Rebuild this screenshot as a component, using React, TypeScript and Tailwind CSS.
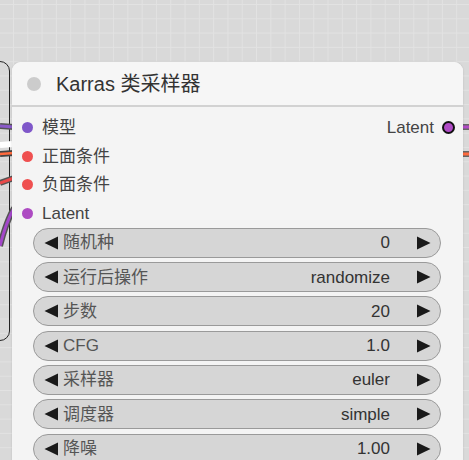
import React from "react";

const font = { fontFamily: '"Liberation Sans", "Noto Sans CJK SC", sans-serif' };

const inputs = [
  { label: "模型", color: "bg-[#7f57c9]" },
  { label: "正面条件", color: "bg-[#ef5050]" },
  { label: "负面条件", color: "bg-[#ef5050]" },
  { label: "Latent", color: "bg-[#ad4bc2]" },
];

const widgets = [
  { label: "随机种", value: "0" },
  { label: "运行后操作", value: "randomize" },
  { label: "步数", value: "20" },
  { label: "CFG", value: "1.0" },
  { label: "采样器", value: "euler" },
  { label: "调度器", value: "simple" },
  { label: "降噪", value: "1.00" },
];

function Tri({ dir }: { dir: "l" | "r" }) {
  return (
    <svg width="14" height="14" viewBox="0 0 14 14" className="shrink-0">
      {dir === "l" ? (
        <polygon points="14,0.5 14,13.5 0.5,7" fill="#1a1a1a" />
      ) : (
        <polygon points="0,0.5 0,13.5 13.5,7" fill="#1a1a1a" />
      )}
    </svg>
  );
}

export default function App() {
  return (
    <div
      className="relative w-[469px] h-[460px] overflow-hidden bg-[#d9d9d9] bg-[linear-gradient(to_right,#e2e2e2_1px,transparent_1px),linear-gradient(to_bottom,#e2e2e2_1px,transparent_1px)] bg-[size:14.3px_14.3px] bg-[position:13px_4px]"
      style={font}
    >
      {/* neighbouring node outline */}
      <div className="absolute left-[-100px] top-[61px] w-[110px] h-[280px] rounded-[10px] border border-[#222]" />

      {/* wires */}
      <svg className="absolute left-0 top-0" width="469" height="460">
        <g fill="none" strokeLinecap="butt">
          <path d="M0 126 L14 127" stroke="#555" strokeWidth="6" />
          <path d="M0 126 L14 127" stroke="#8a5ac8" strokeWidth="3" />
          <path d="M0 154 L14 153" stroke="#444" strokeWidth="6" />
          <path d="M0 154 L14 153" stroke="#ff6a3d" strokeWidth="2.5" />
          <path d="M0 145 L12 144" stroke="#ffffff" strokeWidth="6" />
          <path d="M0 183 L14 178" stroke="#555" strokeWidth="6" />
          <path d="M0 183 L14 178" stroke="#e94a4a" strokeWidth="3" />
          <path d="M0 246 Q6 222 14 208" stroke="#555" strokeWidth="6" />
          <path d="M0 246 Q6 222 14 208" stroke="#a347c9" strokeWidth="3" />
          <path d="M460 127 L469 127" stroke="#666" strokeWidth="6" />
          <path d="M460 127 L469 127" stroke="#b04bc6" strokeWidth="3" />
          <path d="M460 154 L469 154" stroke="#666" strokeWidth="6" />
          <path d="M460 154 L469 154" stroke="#ff6a3d" strokeWidth="3" />
        </g>
      </svg>

      {/* node */}
      <div className="absolute left-[12px] top-[62px] w-[451px] h-[420px] rounded-[9px] bg-[#f4f4f4] shadow-[0_0_2px_rgba(0,0,0,0.15)]">
        <div className="h-[45px] flex items-center rounded-t-[9px] bg-[#f6f6f6] border-b-2 border-[#d2d2d2]">
          <div className="w-[14px] h-[14px] rounded-full bg-[#cccccc] ml-[15px]" />
          <span className="ml-[15px] text-[20px] text-[#333] leading-none">Karras 类采样器</span>
        </div>

        <div className="pt-[6px] flex flex-col">
          {inputs.map((inp, i) => (
            <div key={i} className="h-[28.7px] flex items-center">
              <div className={`w-[11px] h-[11px] rounded-full ${inp.color} ml-[10px]`} />
              <span className="ml-[9px] text-[17px] text-[#444] leading-none">{inp.label}</span>
              {i === 0 && (
                <div className="ml-auto flex items-center">
                  <span className="text-[17px] text-[#444] leading-none">Latent</span>
                  <div className="w-[13px] h-[13px] rounded-full bg-[#b04bc6] border-2 border-[#111] ml-[8px] mr-[8px]" />
                </div>
              )}
            </div>
          ))}
        </div>

        <div className="flex flex-col gap-[4.3px] pl-[21px] pr-[22px]">
          {widgets.map((w, i) => (
            <div
              key={i}
              className="h-[30px] flex items-center rounded-full border-[1.5px] border-[#9a9a9a] bg-[#d6d6d6] pl-[10px] pr-[9px]"
            >
              <Tri dir="l" />
              <span className="ml-[5px] text-[17px] text-[#555] leading-none">{w.label}</span>
              <span className="ml-auto text-[17px] text-[#333] leading-none">{w.value}</span>
              <div className="w-[27px]" />
              <Tri dir="r" />
            </div>
          ))}
        </div>
      </div>
    </div>
  );
}
